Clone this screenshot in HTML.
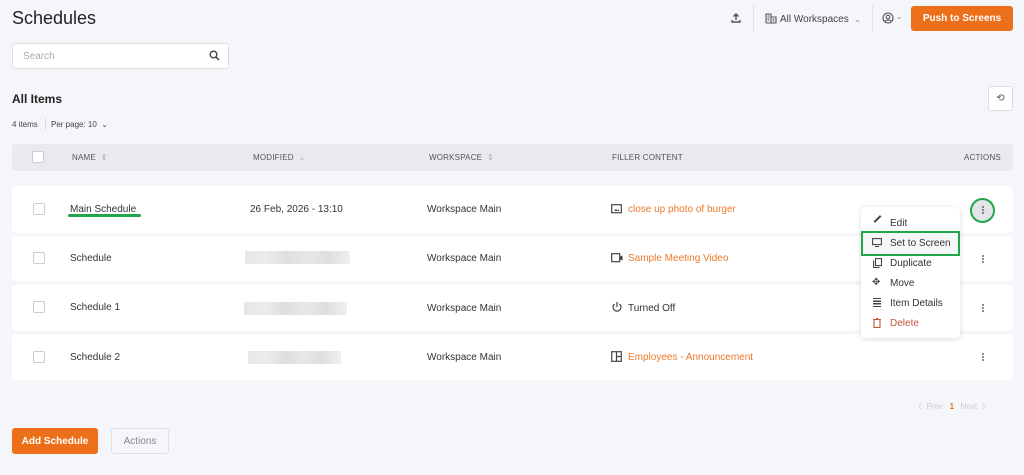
<!DOCTYPE html>
<html><head><meta charset="utf-8"><style>
*{box-sizing:border-box;margin:0;padding:0}
body{width:1024px;height:475px;background:#f5f6fa;font-family:"Liberation Sans",sans-serif;color:#333;position:relative;overflow:hidden;font-size:10px}
.a{position:absolute}
.row{position:absolute;left:12px;width:1001px;background:#fff;border-radius:4px}
.cb{position:absolute;width:12px;height:12px;border:1px solid #c9ccd3;border-radius:2px;background:#fff}
.th{position:absolute;top:153px;font-size:8px;color:#555;letter-spacing:.2px}
.t{position:absolute;font-size:10px;color:#333;margin-top:2px}
.or{color:#ed7a2a}
.blur{position:absolute;height:13px;background:linear-gradient(90deg,#e6e6e8,#ececee 20%,#dedee0 40%,#e8e8ea 60%,#dedee0 80%,#f0f0f2)}
.dots{position:absolute;width:2px;height:2px;background:#666;border-radius:1px;box-shadow:0 3px 0 #666,0 6px 0 #666}
.mi{position:absolute;left:890px;font-size:10px;color:#333;margin-top:1px}
</style></head><body>
<div class="a" style="left:12px;top:8px;font-size:18px;color:#222">Schedules</div>
<div class="a" style="left:12px;top:43px;width:217px;height:26px;background:#fff;border:1px solid #dcdfe4;border-radius:3px"></div>
<div class="a" style="left:23px;top:51px;font-size:10px;color:#aaa">Search</div>
<svg class="a" style="left:209px;top:50px" width="11" height="11" viewBox="0 0 11 11"><circle cx="4.5" cy="4.5" r="3.3" fill="none" stroke="#444" stroke-width="1.4"/><path d="M7 7l3 3" stroke="#444" stroke-width="1.5"/></svg>
<div class="a" style="left:12px;top:92px;font-size:12px;font-weight:bold;color:#222">All Items</div>
<div class="a" style="left:12px;top:120px;font-size:8px;color:#444">4 items</div>
<div class="a" style="left:45px;top:118px;width:1px;height:12px;background:#ddd"></div>
<div class="a" style="left:51px;top:120px;font-size:8px;color:#444">Per page: 10 &nbsp;⌄</div>

<svg class="a" style="left:730px;top:12px" width="12" height="12" viewBox="0 0 12 12"><path d="M6 8V2M3.5 4.5L6 2l2.5 2.5M2 8v2h8V8" fill="none" stroke="#555" stroke-width="1.4"/></svg>
<div class="a" style="left:753px;top:5px;width:1px;height:27px;background:#e2e4e8"></div>
<svg class="a" style="left:765px;top:13px" width="12" height="11" viewBox="0 0 12 11"><path d="M1 10V1h5v9M6 4h5v6H1M2.5 3h2M2.5 5h2M2.5 7h2M7.5 6h2M7.5 8h2" fill="none" stroke="#555" stroke-width="1.1"/></svg>
<div class="a" style="left:780px;top:14px;font-size:10px;color:#444">All Workspaces &nbsp;<span style="font-size:8px;color:#888">⌄</span></div>
<div class="a" style="left:872px;top:5px;width:1px;height:26px;background:#e2e4e8"></div>
<svg class="a" style="left:882px;top:12px" width="12" height="12" viewBox="0 0 12 12"><circle cx="6" cy="6" r="5" fill="none" stroke="#555" stroke-width="1.1"/><circle cx="6" cy="5" r="1.8" fill="none" stroke="#555" stroke-width="1.1"/><path d="M2.8 9.5c1.5-2 4.9-2 6.4 0" fill="none" stroke="#555" stroke-width="1.1"/></svg>
<div class="a" style="left:896px;top:12px;font-size:8px;color:#888">⌄</div>
<div class="a" style="left:911px;top:6px;width:102px;height:25px;background:#ec7019;border-radius:3px;color:#fff;font-size:10px;font-weight:bold;text-align:center;line-height:25px">Push to Screens</div>
<div class="a" style="left:988px;top:86px;width:25px;height:25px;background:#fff;border:1px solid #dcdfe4;border-radius:3px;text-align:center;line-height:23px;font-size:10px;color:#555">⟲</div>

<div class="row" style="top:144px;height:27px;background:#e8eaf0"></div>
<div class="cb" style="left:32px;top:151px"></div>
<div class="th" style="left:72px">NAME &nbsp;<span style="color:#aaa">⇕</span></div>
<div class="th" style="left:253px">MODIFIED &nbsp;<span style="color:#aaa">⌄</span></div>
<div class="th" style="left:429px">WORKSPACE &nbsp;<span style="color:#aaa">⇕</span></div>
<div class="th" style="left:612px">FILLER CONTENT</div>
<div class="th" style="left:964px">ACTIONS</div>

<div class="row" style="top:186px;height:47px"></div>
<div class="row" style="top:236px;height:45px"></div>
<div class="row" style="top:285px;height:46px"></div>
<div class="row" style="top:334px;height:46px"></div>

<div class="cb" style="left:33px;top:203px"></div>
<div class="cb" style="left:33px;top:252px"></div>
<div class="cb" style="left:33px;top:301px"></div>
<div class="cb" style="left:33px;top:351px"></div>

<div class="t" style="left:70px;top:202px">Main Schedule</div>
<div class="a" style="left:68px;top:214px;width:73px;height:3px;background:#1fa64a;border-radius:2px"></div>
<div class="t" style="left:70px;top:251px">Schedule</div>
<div class="t" style="left:70px;top:300px">Schedule 1</div>
<div class="t" style="left:70px;top:350px">Schedule 2</div>

<div class="t" style="left:250px;top:202px">26 Feb, 2026 - 13:10</div>
<div class="blur" style="left:245px;top:251px;width:105px"></div>
<div class="blur" style="left:244px;top:302px;width:103px"></div>
<div class="blur" style="left:248px;top:351px;width:93px"></div>

<div class="t" style="left:427px;top:202px">Workspace Main</div>
<div class="t" style="left:427px;top:251px">Workspace Main</div>
<div class="t" style="left:427px;top:301px">Workspace Main</div>
<div class="t" style="left:427px;top:350px">Workspace Main</div>

<svg class="a" style="left:611px;top:204px" width="11" height="10" viewBox="0 0 11 10"><rect x=".7" y=".7" width="9.6" height="8" fill="none" stroke="#444" stroke-width="1.2"/><path d="M3 7l2-2 1.5 1.5L8 5v2z" fill="#444"/></svg>
<div class="t or" style="left:628px;top:202px">close up photo of burger</div>
<svg class="a" style="left:611px;top:253px" width="12" height="10" viewBox="0 0 12 10"><rect x=".7" y=".7" width="8" height="8" fill="none" stroke="#444" stroke-width="1.2"/><path d="M9 3.5l2.5-1v5L9 6.5z" fill="#444"/></svg>
<div class="t or" style="left:628px;top:251px">Sample Meeting Video</div>
<svg class="a" style="left:611px;top:301px" width="12" height="12" viewBox="0 0 12 12"><path d="M6 1v5M3.5 3A4 4 0 1 0 8.5 3" fill="none" stroke="#444" stroke-width="1.2"/></svg>
<div class="t" style="left:628px;top:301px">Turned Off</div>
<svg class="a" style="left:611px;top:351px" width="11" height="11" viewBox="0 0 11 11"><rect x=".7" y=".7" width="9.6" height="9.6" fill="none" stroke="#444" stroke-width="1.2"/><path d="M5.5 1v9M5.5 5.5h4.5" stroke="#444" stroke-width="1.2"/></svg>
<div class="t or" style="left:628px;top:350px">Employees - Announcement</div>

<div class="a" style="left:970px;top:198px;width:25px;height:25px;border-radius:50%;background:#e4e5e8;border:2.5px solid #1fa64a"></div>
<div class="dots" style="left:982px;top:206px"></div>
<div class="dots" style="left:982px;top:255px"></div>
<div class="dots" style="left:982px;top:304px"></div>
<div class="dots" style="left:982px;top:353px"></div>

<div class="a" style="left:861px;top:207px;width:99px;height:131px;background:#fff;border-radius:4px;box-shadow:0 1px 6px rgba(0,0,0,.15)"></div>
<div class="a" style="left:861px;top:231px;width:99px;height:25px;border:2.5px solid #1fa64a;background:#f6f7f9"></div>
<div class="a" style="left:873px;top:218px;width:9px;height:2px;background:#444;transform:rotate(-45deg)"></div>
<div class="mi" style="top:217px">Edit</div>
<svg class="a" style="left:872px;top:238px" width="10" height="9" viewBox="0 0 10 9"><rect x=".6" y=".6" width="8.8" height="6" fill="none" stroke="#444" stroke-width="1.1"/><path d="M3 8.5h4" stroke="#444"/></svg>
<div class="mi" style="top:237px">Set to Screen</div>
<svg class="a" style="left:873px;top:258px" width="9" height="10" viewBox="0 0 9 10"><rect x="2.5" y=".6" width="6" height="7" fill="none" stroke="#444" stroke-width="1.1"/><path d="M.6 2.5v7h6" fill="none" stroke="#444" stroke-width="1.1"/></svg>
<div class="mi" style="top:257px">Duplicate</div>
<div class="a" style="left:872px;top:277px;font-size:10px;color:#444">✥</div>
<div class="mi" style="top:277px">Move</div>
<div class="a" style="left:873px;top:298px;width:8px;height:9px;background:repeating-linear-gradient(#444 0 1.2px,transparent 1.2px 2.6px)"></div>
<div class="mi" style="top:297px">Item Details</div>
<svg class="a" style="left:873px;top:318px" width="8" height="10" viewBox="0 0 8 10"><path d="M0 1.5h8M3 .5h2M1 2v7.4h6V2" fill="none" stroke="#c0563a" stroke-width="1.1"/></svg>
<div class="mi" style="top:317px;color:#c0563a">Delete</div>

<div class="a" style="left:914px;top:401px;font-size:8px;color:#c8cad0">〈 &nbsp;Prev &nbsp; <span style="color:#ec7019;font-weight:bold">1</span> &nbsp; Next &nbsp;〉</div>
<div class="a" style="left:12px;top:428px;width:86px;height:26px;background:#ec7019;border-radius:3px;color:#fff;font-weight:bold;font-size:10px;text-align:center;line-height:27px">Add Schedule</div>
<div class="a" style="left:111px;top:428px;width:58px;height:26px;border:1px solid #dcdfe4;border-radius:3px;color:#888;font-size:10px;text-align:center;line-height:25px">Actions</div>
</body></html>
